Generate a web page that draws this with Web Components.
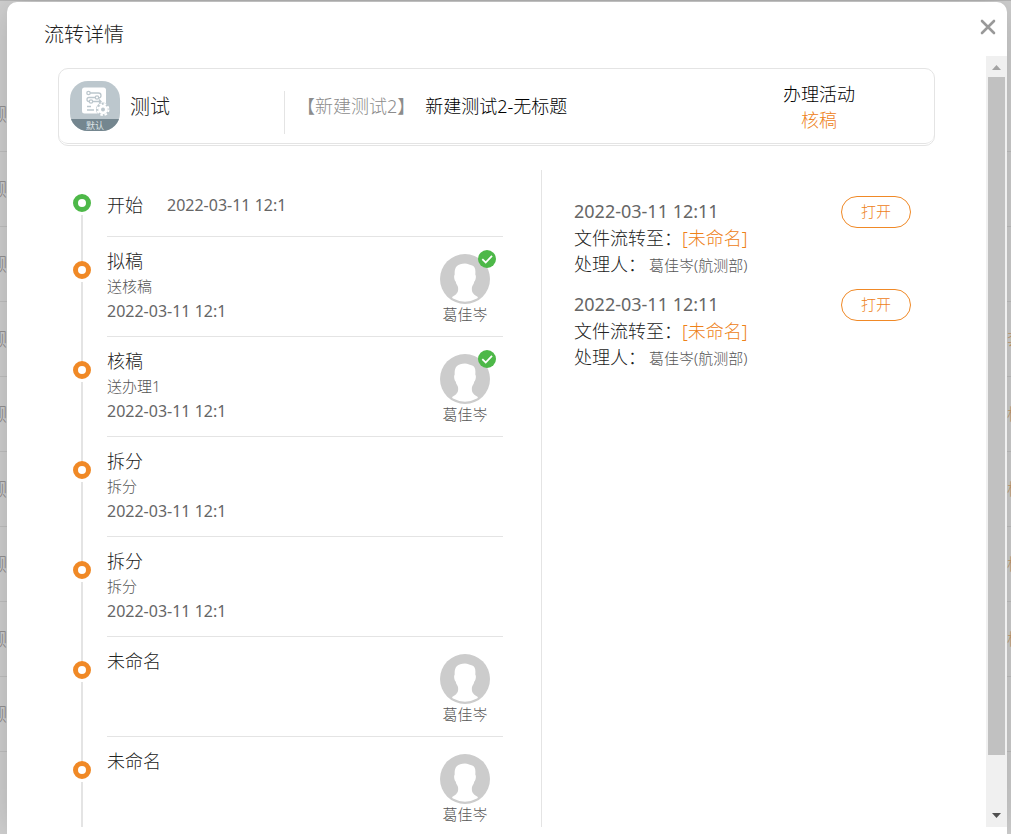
<!DOCTYPE html>
<html lang="zh-CN">
<head>
<meta charset="utf-8">
<title>流转详情</title>
<style>
:root{--accent:#ee8118;--green:#4db848;--line:#e4e4e4;--ink:#222;--muted:#555;--date:#666}
html,body{margin:0;height:100%;overflow:hidden}
body{background:#ccc;font-family:"Noto Sans","Noto Sans CJK SC",sans-serif;font-size:18px;font-weight:300;line-height:26px;color:var(--ink);position:relative}
</style>
</head>
<body>
<flow-app></flow-app>
<script>
const define=(name,html,init)=>customElements.define(name,class extends HTMLElement{
  constructor(){
    super();
    const t=document.createElement('template');
    t.innerHTML=html;
    this.attachShadow({mode:'open'}).append(t.content.cloneNode(true));
  }
  connectedCallback(){ if(init) init(this,this.shadowRoot); }
});

/* dimmed list page behind the dialog */
define('page-backdrop',`
<style>
:host{display:block;position:absolute;inset:0;overflow:hidden;background:#d2d2d2;border-top:1px solid #b9b9b9;box-sizing:border-box;padding-top:76px}
.row{display:flex;justify-content:space-between;height:75px;box-sizing:border-box;border-bottom:1px solid #c2c2c2;align-items:center;color:#8c8787;font-size:18px}
.row span:first-child{margin-left:-6px}
.row span:last-child{color:#c79a6c;width:4px;overflow:hidden;white-space:nowrap;font-size:16px}
</style><div id="rows"></div>`,(el,r)=>{
  r.getElementById('rows').innerHTML=Array.from({length:9},(_,i)=>
    `<div class="row"><span>测</span><span>${i===3?'套':i>3&&i<8?'核':''}</span></div>`).join('');
});

define('user-avatar',`
<style>
:host{display:flex;flex-direction:column;align-items:center;width:50px;color:var(--muted);font-size:15px;line-height:20px}
.pic{position:relative;width:50px;height:50px}
svg{display:block}
.ok{position:absolute;top:-4px;right:-6px;display:none}
:host([done]) .ok{display:block}
.name{white-space:nowrap}
</style>
<div class="pic">
<svg width="50" height="50" viewBox="0 0 50 50"><circle cx="25" cy="25" r="25" fill="#ccc"/><path d="M25 9.500C28 9.500 29 11 31.500 11.200C35 12 35.800 15 35.300 20.500C36.600 22 35.500 27 34.300 27.500C34 30 32.500 31 32 33C31.500 37 32 40 37.500 42.800C38 43 38 44 37 44.600Q25 51 13 44.600C12 44 12 43 12.500 42.800C18 40 18.500 37 18 33C17.500 31 16 30 15.700 27.500C14.500 27 13.400 22 14.700 20.500C14.200 13.500 17 9.500 25 9.500Z" fill="#fff"/></svg>
<svg class="ok" width="18" height="18" viewBox="0 0 18 18"><circle cx="9" cy="9" r="9" fill="#4db848"/><path d="M4.300 9.200L7.700 12.500L14 5.900" fill="none" stroke="#fff" stroke-width="1.800"/></svg>
</div>
<span class="name"><slot></slot></span>`);

define('flow-step',`
<style>
:host{display:grid;grid-template-columns:18px 1fr;column-gap:16px;min-height:100px}
.rail{display:grid;grid-template-rows:24px 18px 1fr;justify-items:center}
.seg{width:2px;background:var(--line)}
.seg:last-child{margin-top:3px}
.dot{width:18px;height:18px;box-sizing:border-box;border:5px solid #f08926;border-radius:50%;background:#fff}
.body{display:flex;justify-content:space-between;border-bottom:1px solid var(--line);padding:12px 13px 0 0}
.text{display:flex;flex-direction:column;line-height:25px;color:var(--muted);font-size:15px}
.title{color:var(--ink);font-size:18px}
::slotted(time){font-size:16px}
::slotted(user-avatar){margin-top:5px}
:host([start]){min-height:67px}
:host([start]) .dot{border-color:var(--green)}
:host([start]) .seg:first-child{visibility:hidden}
:host([start]) .body{padding-top:23px}
:host([start]) .text{flex-direction:row;gap:24px}
</style>
<div class="rail"><i class="seg"></i><i class="dot"></i><i class="seg"></i></div>
<div class="body"><div class="text"><span class="title"></span><slot></slot></div><slot name="user"></slot></div>`,
(el,r)=>{r.querySelector('.title').textContent=el.getAttribute('label')});

define('flow-record',`
<style>
:host{display:flex;justify-content:space-between;align-items:flex-start;margin-bottom:12px}
.text{padding-top:2px;white-space:nowrap}
.to{color:var(--accent)}
.who{color:var(--muted);font-size:15px;margin-left:3px}
.text div{height:26px}
.text .date{height:27px}
button{font:inherit;font-size:15px;line-height:20px;color:var(--accent);background:#fff;border:1px solid #f08926;border-radius:16px;width:70px;height:32px;padding:0 0 2px;cursor:pointer}
</style>
<div class="text">
<div class="date"><slot name="date"></slot></div>
<div>文件流转至：<span class="to"><slot name="to"></slot></span></div>
<div>处理人：<span class="who"><slot name="who"></slot></span></div>
</div>
<button type="button">打开</button>`);

define('flow-icon',`
<style>:host{display:block;width:50px;height:50px}svg{display:block}text{font-family:"Noto Sans CJK SC",sans-serif;font-size:9px;font-weight:400}</style>
<svg width="50" height="50" viewBox="0 0 50 50">
<defs><clipPath id="c"><rect width="50" height="50" rx="18"/></clipPath></defs>
<g clip-path="url(#c)"><rect width="50" height="50" fill="#bcc7cd"/><rect y="38" width="50" height="12" fill="#74868f"/></g>
<rect x="12" y="6.500" width="24" height="26" rx="2.500" fill="#fff"/>
<g fill="none" stroke="#bcc7cd" stroke-width="1.300">
<circle cx="18.500" cy="12" r="1.700"/><path d="M20 12H28.500Q31 12 31 14.500T28.500 17"/><circle cx="27" cy="16.500" r="1.700"/><path d="M25 16.500H19Q17 16.500 17 18.500T19 20.500"/><circle cx="21" cy="20.500" r="1.700"/><path d="M23 20.500H31M29 18.500L31 20.500L29 22.500M17 25.500H21M17 29H24"/></g>
<circle cx="33" cy="28.500" r="5.800" fill="#fff"/>
<circle cx="33" cy="28.500" r="5.500" fill="none" stroke="#bcc7cd" stroke-width="3"/>
<circle cx="33" cy="28.500" r="5.500" fill="none" stroke="#fff" stroke-width="2" stroke-dasharray="2.520 1.800"/>
<circle cx="33" cy="28.500" r="3.300" fill="none" stroke="#fff" stroke-width="2.800"/>
<circle cx="33" cy="28.500" r="2" fill="#bcc7cd"/>
<text x="25" y="47.500" text-anchor="middle" fill="#dfe5e8">默认</text>
</svg>`);

define('summary-card',`
<style>
:host{display:block;border:1px solid var(--line);border-radius:10px;padding-bottom:1px;background:#fff}
.in{display:grid;grid-template-columns:226px 1fr 230px;align-items:center;height:74px;border-bottom:1px solid var(--line);border-radius:9px}
.app{display:flex;align-items:center;gap:10px;padding-left:11px;border-right:1px solid var(--line);height:43px;margin-top:12px;box-sizing:border-box;font-size:20px}
.app>*{margin-top:-12px}
.app>span{margin-top:-10px}
.doc{display:flex;gap:10px;padding-left:12px;color:#000;white-space:nowrap}
.cat{color:#8c8c8c}
.act{text-align:center;color:#000;padding-top:2px}
.act b{display:block;font-weight:inherit;color:var(--accent)}
</style>
<div class="in">
<div class="app"><flow-icon></flow-icon><span><slot name="app"></slot></span></div>
<div class="doc"><span class="cat"><slot name="cat"></slot></span><span><slot name="doc"></slot></span></div>
<div class="act">办理活动<b><slot name="act"></slot></b></div>
</div>`);

define('scroll-bar',`
<style>
:host{display:flex;flex-direction:column;width:21px;background:#f0f0f0}
svg{display:block;width:21px;height:21px;flex:none}
.track{flex:1;display:flex;flex-direction:column;padding:0 2px}
.thumb{height:93%;background:#c1c1c1}
</style>
<svg viewBox="0 0 21 21"><path d="M6 14L10.500 9L15 14Z" fill="#a3a3a3"/></svg>
<div class="track"><div class="thumb"></div></div>
<svg viewBox="0 0 21 21"><path d="M6 7L10.500 12L15 7Z" fill="#505050"/></svg>`);

define('detail-dialog',`
<style>
:host{display:flex;flex-direction:column;position:relative;box-sizing:border-box;height:calc(100vh - 2px);margin:0 4px 0 7px;background:#fff;border-radius:10px 10px 0 0;box-shadow:1px 1px 40px rgba(0,0,0,.2);padding-bottom:7px}
header{display:flex;justify-content:space-between;align-items:center;height:54px;padding:0 11px 0 37px;flex:none;box-sizing:border-box}
h1{margin:12px 0 0;font-size:20px;font-weight:inherit;line-height:26px}
button{border:0;padding:0;background:none;width:16px;height:16px;cursor:pointer;margin-bottom:4px}
button svg{display:block}
main{flex:1;min-height:0;display:grid;grid-template-columns:1fr 21px}
.view{overflow:hidden;padding:12px 51px 0}
</style>
<header><h1><slot name="title"></slot></h1><button type="button" aria-label="关闭"><svg width="16" height="16" viewBox="0 0 16 16"><path d="M2 2L14 14M14 2L2 14" stroke="#999" stroke-width="2.600" stroke-linecap="round"/></svg></button></header>
<main><div class="view"><slot></slot></div><scroll-bar></scroll-bar></main>`);

define('flow-columns',`
<style>
:host{display:grid;grid-template-columns:484fr 393fr;margin-top:24px}
.l{padding:0 38px 0 15px;border-right:1px solid var(--line)}
.r{padding:26px 24px 0 32px}
</style>
<div class="l"><slot name="steps"></slot></div><div class="r"><slot name="records"></slot></div>`);

define('flow-app',`
<style>:host{display:block;padding-top:2px}time{display:block;font-weight:400;color:var(--date)}</style>
<page-backdrop></page-backdrop>
<detail-dialog>
<span slot="title">流转详情</span>
<summary-card><span slot="app">测试</span><span slot="cat">【新建测试2】</span><span slot="doc">新建测试2-无标题</span><span slot="act">核稿</span></summary-card>
<flow-columns>
<div slot="steps">
<flow-step start label="开始"><time>2022-03-11 12:1</time></flow-step>
<flow-step label="拟稿"><span>送核稿</span><time>2022-03-11 12:1</time><user-avatar slot="user" done>葛佳岑</user-avatar></flow-step>
<flow-step label="核稿"><span>送办理1</span><time>2022-03-11 12:1</time><user-avatar slot="user" done>葛佳岑</user-avatar></flow-step>
<flow-step label="拆分"><span>拆分</span><time>2022-03-11 12:1</time></flow-step>
<flow-step label="拆分"><span>拆分</span><time>2022-03-11 12:1</time></flow-step>
<flow-step label="未命名"><user-avatar slot="user">葛佳岑</user-avatar></flow-step>
<flow-step label="未命名"><user-avatar slot="user">葛佳岑</user-avatar></flow-step>
</div>
<div slot="records">
<flow-record><time slot="date">2022-03-11 12:11</time><span slot="to">[未命名]</span><span slot="who">葛佳岑(航测部)</span></flow-record>
<flow-record><time slot="date">2022-03-11 12:11</time><span slot="to">[未命名]</span><span slot="who">葛佳岑(航测部)</span></flow-record>
</div>
</flow-columns>
</detail-dialog>`);
</script>
</body>
</html>
